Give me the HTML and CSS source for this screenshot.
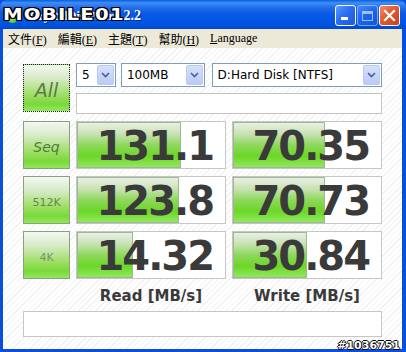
FILE: index.html
```html
<!DOCTYPE html>
<html lang="zh-Hant">
<head>
    <meta charset="UTF-8">
    <title>CrystalDiskMark 2.2</title>
    <link rel="stylesheet" href="styles.css">
</head>
<body>
<div class="window">
    <!--标题栏-->
    <div class="titlebar">
        <span class="app-icon"></span>
        <span class="title">CrystalDiskMark <b>2.2</b></span>
        <span class="watermark">MOBILE01</span>
        <div class="title-buttons">
            <span class="tb tb-min"><i></i></span>
            <span class="tb tb-max"><i></i></span>
            <span class="tb tb-close">
                <svg width="13" height="13" viewBox="0 0 13 13"><path d="M2 2 L11 11 M11 2 L2 11" stroke="#fff" stroke-width="2.2" stroke-linecap="square"/></svg>
            </span>
        </div>
    </div>
    <!--菜单-->
    <div class="menubar">
        <span class="menu-item">文件(<u>F</u>)</span>
        <span class="menu-item">編輯(<u>E</u>)</span>
        <span class="menu-item">主題(<u>T</u>)</span>
        <span class="menu-item">幫助(<u>H</u>)</span>
        <span class="menu-item"><u>L</u>anguage</span>
    </div>
    <!--主体-->
    <div class="client">
        <div class="grid">
            <div class="test-btn btn-all">All</div>
            <div class="controls">
                <div class="combo-row">
                    <div class="combo combo-count"><span>5</span><i class="drop"><svg width="9" height="6" viewBox="0 0 9 6"><path d="M1 1 L4.5 4.5 L8 1" fill="none" stroke="#4d6185" stroke-width="1.6"/></svg></i></div>
                    <div class="combo combo-size"><span>100MB</span><i class="drop"><svg width="9" height="6" viewBox="0 0 9 6"><path d="M1 1 L4.5 4.5 L8 1" fill="none" stroke="#4d6185" stroke-width="1.6"/></svg></i></div>
                    <div class="combo combo-drive"><span>D:Hard Disk [NTFS]</span><i class="drop"><svg width="9" height="6" viewBox="0 0 9 6"><path d="M1 1 L4.5 4.5 L8 1" fill="none" stroke="#4d6185" stroke-width="1.6"/></svg></i></div>
                </div>
                <div class="textbox"></div>
            </div>

            <div class="test-btn btn-seq">Seq</div>
            <div class="result"><div class="fill" style="width:70%"></div><span>131.1</span></div>
            <div class="result"><div class="fill" style="width:62%"></div><span>70.35</span></div>

            <div class="test-btn btn-small">512K</div>
            <div class="result"><div class="fill" style="width:69%"></div><span>123.8</span></div>
            <div class="result"><div class="fill" style="width:62%"></div><span>70.73</span></div>

            <div class="test-btn btn-small btn-4k">4K</div>
            <div class="result"><div class="fill" style="width:38%"></div><span>14.32</span></div>
            <div class="result"><div class="fill" style="width:50%"></div><span>30.84</span></div>

            <div></div>
            <div class="caption">Read [MB/s]</div>
            <div class="caption">Write [MB/s]</div>
        </div>
        <div class="status"></div>
    </div>
    <span class="tag">#1036751</span>
</div>
</body>
</html>
```

FILE: styles.css
```css
* {
    box-sizing: border-box;
}

body {
    margin: 0;
    background: #fff;
}

/*窗口*/
.window {
    width: 406px;
    height: 352px;
    background: #0a4fdc;
    padding: 0 4px 3px 3px;
    display: flex;
    flex-direction: column;
    position: relative;
    overflow: hidden;
}

/*标题栏*/
.titlebar {
    height: 29px;
    margin: 0 -4px 0 -3px;
    border-radius: 7px 7px 0 0;
    background: linear-gradient(to bottom, #0a5ee0 0%, #3d8ff5 10%, #2a73ea 22%, #0a5ae6 45%, #0055e3 80%, #0049d0 100%);
    position: relative;
}

.app-icon {
    position: absolute;
    left: 7px;
    top: 12px;
    width: 11px;
    height: 11px;
    border-radius: 50%;
    background: radial-gradient(circle at 40% 40%, #b6f07a, #3ea81a);
}

.title {
    position: absolute;
    right: 265px;
    top: 8px;
    font: bold 12px "Liberation Serif", serif;
    color: #fff;
    text-shadow: 1px 1px 0 #0a2a88;
    white-space: nowrap;
}

.title b {
    font-size: 14px;
}

.watermark {
    position: absolute;
    left: 3px;
    top: 5px;
    font: bold 16px "DejaVu Sans", sans-serif;
    letter-spacing: 1px;
    color: #fff;
    transform: scaleX(1.23);
    transform-origin: left center;
    text-shadow: 1px 0 0 #000, -1px 0 0 #000, 0 1px 0 #000, 0 -1px 0 #000,
                 1px 1px 0 #000, -1px -1px 0 #000, 1px -1px 0 #000, -1px 1px 0 #000;
}

.title-buttons {
    position: absolute;
    right: 6px;
    top: 5px;
    display: flex;
    gap: 1px;
}

.tb {
    width: 21px;
    height: 21px;
    border: 1px solid #fff;
    border-radius: 3px;
    display: flex;
    align-items: center;
    justify-content: center;
    background: linear-gradient(135deg, #5c9bff 0%, #2a6ef0 45%, #1d58dc 100%);
    position: relative;
}

.tb-min i {
    position: absolute;
    left: 5px;
    bottom: 5px;
    width: 7px;
    height: 3px;
    background: #fff;
}

.tb-max {
    opacity: 0.6;
    border-color: #c8d8ff;
}

.tb-max i {
    width: 11px;
    height: 10px;
    border: 1px solid #fff;
    border-top-width: 3px;
}

.tb-close {
    background: linear-gradient(135deg, #f08a68 0%, #e35a2f 45%, #c8401a 100%);
}

/*菜单*/
.menubar {
    height: 19px;
    background: #ece9d8;
    display: flex;
    align-items: center;
    padding-left: 5px;
    gap: 11px;
    font: 12px "Liberation Serif", "Noto Sans CJK TC", serif;
    color: #000;
}

.menu-item {
    white-space: nowrap;
}

/*主体*/
.client {
    flex: 1;
    background-color: #fff;
    background-image: repeating-linear-gradient(135deg, #fff 0, #fff 3px, #f1f1f1 3px, #f1f1f1 4px);
    padding: 15px 0 0 20px;
}

.grid {
    display: grid;
    grid-template-columns: 47px 150px 150px;
    grid-template-rows: 51px 48px 48px 48px 18px;
    column-gap: 6px;
    row-gap: 7px;
}

.test-btn {
    border: 1px solid #8aa07e;
    background: linear-gradient(to bottom, #f4f7f2 0%, #d6eac6 30%, #a6e070 60%, #7ad83a 85%, #92e85a 100%);
    display: flex;
    align-items: center;
    justify-content: center;
    color: #4f7b3e;
    font: 15px "DejaVu Sans", sans-serif;
    padding-top: 4px;
}

.btn-all {
    margin-top: 1px;
    height: 48px;
    border: 1px dotted #222;
    font-size: 19px;
    color: #5b7a4b;
    font-style: italic;
}

.btn-seq {
    font-style: italic;
    font-size: 14px;
}

.btn-small {
    font-size: 11px;
    color: #5f8a50;
}

.btn-4k {
    color: #7a9270;
}

.controls {
    grid-column: 2 / 4;
    display: flex;
    flex-direction: column;
    gap: 6px;
}

.combo-row {
    display: flex;
    gap: 5px;
}

.combo {
    height: 24px;
    border: 1px solid #7f9db9;
    background: #fff;
    display: flex;
    align-items: center;
    justify-content: space-between;
    padding: 1px 1px 1px 5px;
    font: 12px "DejaVu Sans", sans-serif;
    color: #000;
}

.combo-count {
    width: 40px;
}

.combo-size {
    width: 84px;
}

.combo-drive {
    width: 171px;
    margin-left: 2px;
}

.drop {
    width: 17px;
    height: 20px;
    border: 1px solid #bacaf0;
    border-radius: 2px;
    background: linear-gradient(to bottom, #d4e0fd 0%, #b9cbf6 100%);
    display: flex;
    align-items: center;
    justify-content: center;
}

.textbox {
    height: 21px;
    border: 1px solid #c4c4c4;
    background: #fff;
}

/*结果*/
.result {
    border: 1px solid #c6c6c6;
    background: #fff;
    position: relative;
    text-align: right;
    padding: 3px 12px 0 0;
    font: bold 40px "DejaVu Sans", sans-serif;
    letter-spacing: -2px;
    line-height: 43px;
    color: #3a3a3a;
}

.result .fill {
    position: absolute;
    left: 0;
    top: 0;
    bottom: 0;
    border: 1px solid #9fb894;
    background: linear-gradient(to bottom, #eaefe6 0%, #c8e2b2 25%, #8ed85c 50%, #6cd626 75%, #90e85c 100%);
}

.result span {
    position: relative;
}

.caption {
    text-align: center;
    font: bold 15px "DejaVu Sans", sans-serif;
    color: #3a3a3a;
    line-height: 18px;
    margin-top: 1px;
}

.status {
    width: 359px;
    height: 26px;
    margin-top: 7px;
    border: 1px solid #c6c6c6;
    background: #fff;
}

.tag {
    position: absolute;
    right: 6px;
    bottom: 0;
    font: bold 11px "DejaVu Sans", sans-serif;
    color: #fff;
    text-shadow: 1px 0 0 #000, -1px 0 0 #000, 0 1px 0 #000, 0 -1px 0 #000;
}
```
